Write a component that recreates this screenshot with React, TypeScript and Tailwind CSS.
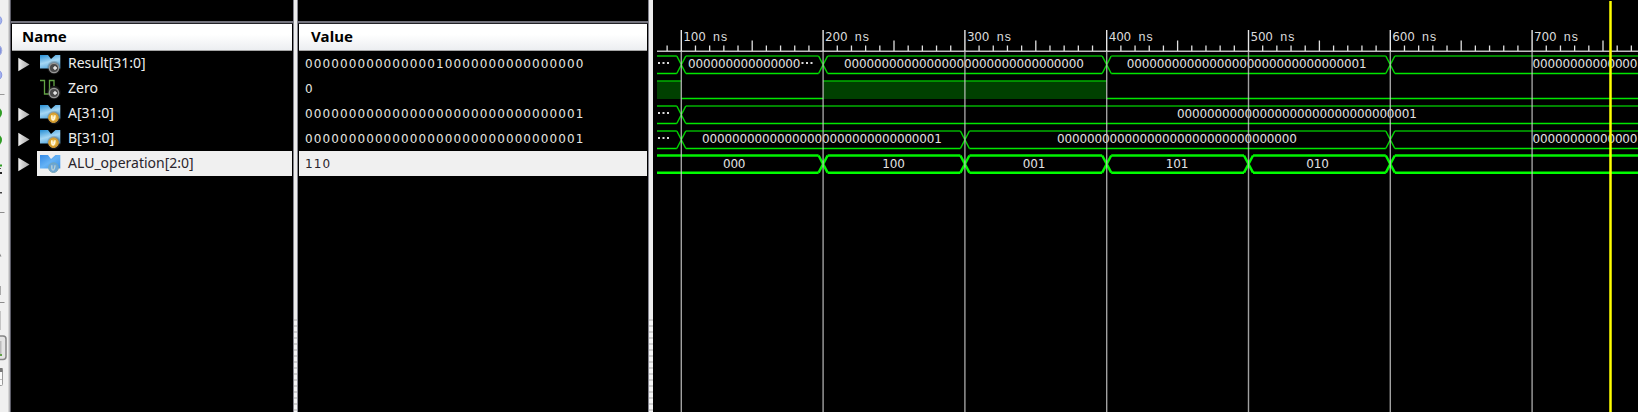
import React from "react";

type SignalKind = "output" | "wire" | "input" | "selected";

interface Signal {
  name: string;
  value: string;
  kind: SignalKind;
}

const ZERO32 = "0".repeat(32);
const ONE32 = "0".repeat(31) + "1";

const signals: Signal[] = [
  { name: "Result[31:0]", value: "0".repeat(15) + "1" + "0".repeat(16), kind: "output" },
  { name: "Zero", value: "0", kind: "wire" },
  { name: "A[31:0]", value: ONE32, kind: "input" },
  { name: "B[31:0]", value: ONE32, kind: "input" },
  { name: "ALU_operation[2:0]", value: "110", kind: "selected" },
];

/* ---------- tool strip at the far left ---------- */

function ToolStrip() {
  return (
    <div className="flex h-full w-[11px] shrink-0 bg-[#f0f0f0]">
      <svg width="8" height="412" viewBox="0 0 8 412" className="shrink-0">
        <circle cx="-3.5" cy="20.5" r="5.3" fill="#a3b3ee" stroke="#8b9ae0" />
        <circle cx="-5" cy="50.5" r="6.8" fill="#8292dd" stroke="#a6aee0" />
        <circle cx="-3.5" cy="75" r="5.3" fill="#a3b0ee" stroke="#8b98e4" />
        <rect x="0" y="94" width="4.5" height="1" fill="#999" />
        <circle cx="-4.5" cy="113" r="6.5" fill="#2f9d24" />
        <circle cx="-4.5" cy="140" r="6.5" fill="#2f9d24" />
        <rect x="0" y="164.5" width="2" height="2" fill="#2f9d24" />
        <rect x="0" y="168" width="1" height="1" fill="#555" />
        <rect x="0" y="172" width="2" height="2" fill="#222" />
        <rect x="0" y="192" width="2" height="1.5" fill="#444" />
        <rect x="0" y="212" width="4.5" height="1" fill="#8c8c8c" />
        <path d="M0 253.5L1.5 256.5H0z" fill="#888" />
        <rect x="0" y="286" width="1" height="9" fill="#aaa" />
        <rect x="0" y="302" width="4.5" height="1" fill="#8c8c8c" />
        <rect x="0" y="311" width="1" height="19" fill="#c4c4c4" />
        <rect x="-6" y="336" width="12" height="23.5" rx="3" fill="#e4e4e4" stroke="#858585" strokeWidth="1.5" />
        <rect x="0" y="341" width="1.5" height="13" fill="#bbb" />
        <rect x="0" y="354" width="2" height="2" fill="#61a048" />
        <rect x="-4" y="368.5" width="6.5" height="17" rx="1" fill="#fafafa" stroke="#999" />
        <rect x="0" y="368" width="2.5" height="4" fill="#777" />
        <path d="M0 379.5H2" stroke="#bbb" />
      </svg>
      <div className="h-full w-[1px] bg-[#d4d4d4]" />
      <div className="h-full w-[1px] bg-[#b4b4b8]" />
      <div className="h-full w-[1px] bg-[#5d5d68]" />
    </div>
  );
}

/* ---------- icons ---------- */

function ExpandArrow() {
  return (
    <svg width="12" height="15" viewBox="0 0 12 15" className="block">
      <defs>
        <linearGradient id="arrow" x1="0" x2="1" y1="0" y2="0">
          <stop offset="0" stopColor="#f2f2f2" />
          <stop offset="0.4" stopColor="#cfcfcf" />
          <stop offset="1" stopColor="#a8a8a8" />
        </linearGradient>
      </defs>
      <path d="M0.3 0.7L11.5 7.5L0.3 14.3z" fill="url(#arrow)" />
    </svg>
  );
}

function SignalIcon({ kind }: { kind: SignalKind }) {
  const sel = kind === "selected";
  const gear = kind === "output" || kind === "wire";
  return (
    <svg width="22" height="22" viewBox="0 1 22 22" className="block shrink-0">
      <defs>
        <linearGradient id="bus" x1="0.1" x2="0.5" y1="0" y2="1">
          <stop offset="0" stopColor="#2d92d6" />
          <stop offset="0.55" stopColor="#a5d7f4" />
          <stop offset="1" stopColor="#57a9df" />
        </linearGradient>
        <linearGradient id="busSel" x1="0" x2="1" y1="0" y2="1">
          <stop offset="0" stopColor="#3389e6" />
          <stop offset="0.5" stopColor="#65b2f5" />
          <stop offset="1" stopColor="#3b91e8" />
        </linearGradient>
        <radialGradient id="gold">
          <stop offset="0" stopColor="#fff3c8" />
          <stop offset="0.5" stopColor="#edbd4a" />
          <stop offset="1" stopColor="#c58a1c" />
        </radialGradient>
        <radialGradient id="halo">
          <stop offset="0.5" stopColor="#555" />
          <stop offset="1" stopColor="#555" stopOpacity="0" />
        </radialGradient>
      </defs>
      {kind === "wire" ? (
        <path d="M1 3.5H5.5V17H10.5V3.5H15V9" fill="none" stroke="#62a344" strokeWidth="1.3" />
      ) : (
        <path
          d="M1 3H9L12 7L16.5 3H21.3V16.5H1z"
          fill={sel ? "url(#busSel)" : "url(#bus)"}
        />
      )}
      {!sel && <circle cx="15" cy="15.5" r="7.3" fill="url(#halo)" opacity="0.8" />}
      {gear && (
        <g>
          <circle cx="15" cy="16" r="4.7" fill="#4a4a4a" stroke="#979797" strokeWidth="1.3" />
          <path d="M14.2 16H18M16 14.1V17.9" stroke="#f2f2f2" strokeWidth="1.3" />
        </g>
      )}
      {!gear && (
        <g>
          <circle
            cx="14.5"
            cy="15.7"
            r="4.8"
            fill={sel ? "#6ba6d6" : "url(#gold)"}
            stroke={sel ? "#76a6b6" : "#e3a93a"}
          />
          <path
            d="M12.8 13.3V16Q12.9 18 14 18Q15.8 17.7 16 13.3"
            fill="none"
            stroke={sel ? "#b7d0d6" : "#fffbe8"}
            strokeWidth="1.4"
          />
        </g>
      )}
    </svg>
  );
}

/* ---------- table columns ---------- */

function PanelHeader({ label, pad }: { label: string; pad: string }) {
  return (
    <>
      <div className="h-[21px] bg-black" />
      <div className="h-[2px] bg-[#73737d]" />
      <div className="h-[1px] bg-[#222226]" />
      <div
        className={`mx-px flex h-[27px] items-center border-b border-[#a5a5a5] bg-linear-to-b from-white from-40% to-[#eceef1] pb-[2px] text-[15px] font-bold leading-none text-black ${pad}`}
      >
        {label}
      </div>
    </>
  );
}

function NameColumn() {
  return (
    <div className="flex h-full w-[282px] shrink-0 flex-col font-['Noto_Sans',sans-serif]">
      <PanelHeader label="Name" pad="pl-[10px]" />
      {signals.map((s) => {
        const sel = s.kind === "selected";
        return (
          <div key={s.name} className="flex h-[25px] items-center">
            <div className="flex w-[26px] justify-end pt-[2px]">
              <div className="w-[19px]">{s.kind !== "wire" && <ExpandArrow />}</div>
            </div>
            <div
              className={
                sel
                  ? "mr-px flex h-[25px] flex-1 items-center bg-[#f0f0f0] pl-[2px] text-[#29242b]"
                  : "mr-px flex h-[25px] flex-1 items-center pl-[2px] text-[#eeeeee]"
              }
            >
              <SignalIcon kind={s.kind} />
              <span className="pb-[2px] pl-[7px] text-[14px] leading-none">{s.name}</span>
            </div>
          </div>
        );
      })}
    </div>
  );
}

function ValueColumn() {
  return (
    <div className="flex h-full w-[350px] shrink-0 flex-col font-['Noto_Sans',sans-serif]">
      <PanelHeader label="Value" pad="pl-[12px] tracking-[0.1px]" />
      {signals.map((s) => (
        <div
          key={s.name}
          className={
            s.kind === "selected"
              ? "mx-px flex h-[25px] items-center bg-[#f0f0f0] pl-[6px] text-[#29242b]"
              : "mx-px flex h-[25px] items-center pl-[6px] text-[#e6e6e0]"
          }
        >
          <span className="font-['DejaVu_Sans',sans-serif] text-[12px] leading-none tracking-[1.1px]">
            {s.value}
          </span>
        </div>
      ))}
    </div>
  );
}

function Splitter({ wide }: { wide?: boolean }) {
  return (
    <div className="flex h-full w-[5px] shrink-0">
      <div className="w-px bg-[#84848e]" />
      <div className="flex flex-1 flex-col bg-[#ededed]">
        <div className="h-[319px]" />
        <div className="flex-1 bg-[repeating-linear-gradient(to_bottom,#cfcfcf_0px,#cfcfcf_2px,#f3f3f3_2px,#f3f3f3_6px)]" />
      </div>
      {!wide && <div className="w-px bg-[#8a8a94]" />}
    </div>
  );
}

/* ---------- waveforms ---------- */

const LEFT = 657;
const RIGHT = 1640;
const PERIOD = 141.8;
const timeX = (ns: number) => 681.3 + ((ns - 100) / 100) * PERIOD;

interface Label {
  x: number;
  text: string;
}

function Bus({
  top,
  height,
  edges,
  labels,
  bold,
}: {
  top: number;
  height: number;
  edges: number[];
  labels: Label[];
  bold?: boolean;
}) {
  const bottom = top + height;
  const xs = edges.map(timeX);
  const starts = [LEFT, ...xs.map((x) => x + 4.5)];
  const ends = [...xs.map((x) => x - 4.5), RIGHT];
  const mid = (top + bottom) / 2;
  return (
    <g>
      {starts.map((s, i) => (
        <g key={i}>
          <path d={`M${s} ${top}H${ends[i]}`} stroke={bold ? "#00f200" : "#00b000"} strokeWidth={bold ? 2.4 : 1.7} />
          <path d={`M${s} ${bottom}H${ends[i]}`} stroke={bold ? "#00ff00" : "#00e600"} strokeWidth={bold ? 2.4 : 1.5} />
        </g>
      ))}
      {xs.map((x) => (
        <path
          key={x}
          d={`M${x - 4.5} ${top}L${x + 4.5} ${bottom}M${x + 4.5} ${top}L${x - 4.5} ${bottom}`}
          fill="none"
          stroke={bold ? "#00f800" : "#00d000"}
          strokeWidth={bold ? 2.5 : 1.5}
        />
      ))}
      {labels.map((l) => (
        <text
          key={l.x}
          x={l.x}
          y={Math.ceil(mid) + 3.4}
          textLength={l.text.length * 7.5}
          fill="#e2e2e2"
          className="font-['DejaVu_Sans',sans-serif] text-[12px]"
        >
          {l.text}
        </text>
      ))}
    </g>
  );
}

function Dots({ x, y }: { x: number; y: number }) {
  return (
    <g fill="#dcdcdc">
      <rect x={x} y={y} width="2" height="2" />
      <rect x={x + 4.5} y={y} width="2" height="2" />
      <rect x={x + 9} y={y} width="2" height="2" />
    </g>
  );
}

function Waveforms() {
  const minor = Array.from({ length: 69 }, (_, i) => 90 + i * 10).filter(
    (t) => t % 100 !== 0 && timeX(t) < RIGHT,
  );
  const majors = [100, 200, 300, 400, 500, 600, 700];
  return (
    <svg width="985" height="412" viewBox="653 0 985 412" className="block shrink-0">
      <path d={`M${LEFT} 51.2H${RIGHT}`} stroke="#bdbdbd" strokeWidth="1.5" />
      {minor.map((t) => (
        <path key={t} d={`M${timeX(t)} ${t % 50 === 0 ? 40.5 : 45.5}V51`} stroke="#e0e0e0" strokeWidth="1.3" />
      ))}

      <Bus
        top={56}
        height={17.5}
        edges={[100, 200, 400, 600]}
        labels={[
          { x: 688, text: "0".repeat(15) },
          { x: 844, text: ZERO32 },
          { x: 1126.7, text: ONE32 },
          { x: 1532.5, text: "0".repeat(14) },
        ]}
      />
      <Dots x={658} y={62} />
      <Dots x={801.5} y={62} />

      <g>
        <rect x={LEFT} y="81" width={timeX(100) - LEFT} height="18" fill="#004000" />
        <rect x={timeX(200)} y="81" width={timeX(400) - timeX(200)} height="18" fill="#004000" />
        <path d={`M${LEFT} 81H${timeX(100)}M${timeX(200)} 81H${timeX(400)}`} stroke="#00b000" strokeWidth="1.6" />
        <path d={`M${timeX(100)} 98.5H${timeX(200)}M${timeX(400)} 98.5H${RIGHT}`} stroke="#00e600" strokeWidth="1.3" />
      </g>

      <Bus top={106} height={17.5} edges={[100]} labels={[{ x: 1177, text: ONE32 }]} />
      <Dots x={658} y={112} />

      <Bus
        top={131}
        height={17.5}
        edges={[100, 300, 600]}
        labels={[
          { x: 702, text: ONE32 },
          { x: 1057, text: ZERO32 },
          { x: 1532.5, text: "0".repeat(14) },
        ]}
      />
      <Dots x={658} y={137} />

      <Bus
        bold
        top={155.5}
        height={17.2}
        edges={[200, 300, 400, 500, 600]}
        labels={[
          { x: 723, text: "000" },
          { x: 882.3, text: "100" },
          { x: 1022.8, text: "001" },
          { x: 1165.8, text: "101" },
          { x: 1306.3, text: "010" },
        ]}
      />

      {majors.map((t) => (
        <g key={t}>
          <path d={`M${timeX(t)} 30V51`} stroke="#e6e6e6" strokeWidth="1.4" />
          <path d={`M${timeX(t)} 51V412`} stroke="#c8c8c8" strokeOpacity="0.8" strokeWidth="1.4" />
          <text x={timeX(t) + 2} y="40.5" textLength="22.5" fill="#dadada" className="font-['DejaVu_Sans',sans-serif] text-[12px]">
            {t}
          </text>
          <text x={timeX(t) + 31.5} y="40.5" textLength="15" fill="#dadada" className="font-['Liberation_Mono',monospace] text-[12.5px]">
            ns
          </text>
        </g>
      ))}
      <path d="M1610.5 1V412" stroke="#ffff00" strokeWidth="2.5" />
    </svg>
  );
}

export default function App() {
  return (
    <div className="flex h-[412px] w-[1638px] overflow-hidden bg-black">
      <ToolStrip />
      <NameColumn />
      <Splitter />
      <ValueColumn />
      <Splitter wide />
      <Waveforms />
    </div>
  );
}
